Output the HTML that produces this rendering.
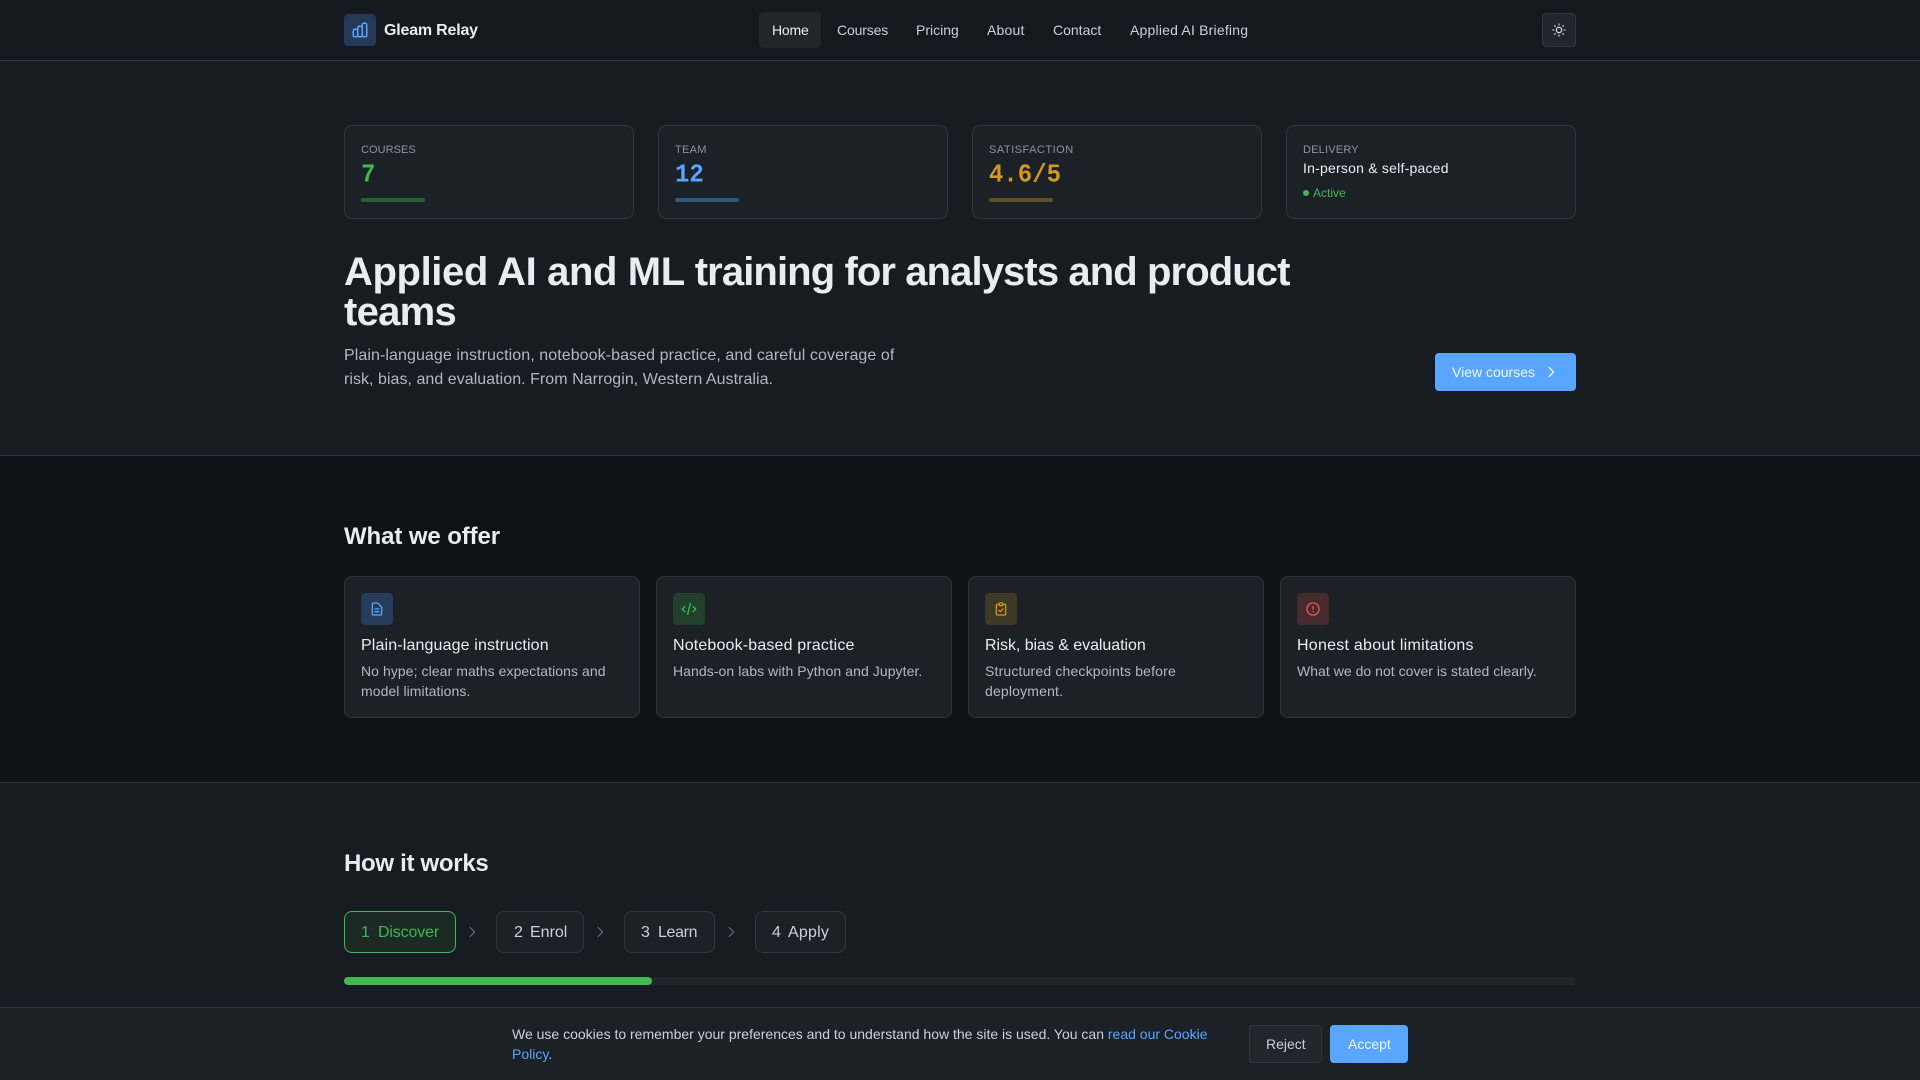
<!DOCTYPE html>
<html lang="en"><head><meta charset="utf-8"><title>Gleam Relay</title>
<style>
*{box-sizing:border-box;margin:0;padding:0}
html,body{width:1920px;height:1080px;overflow:hidden;background:#171b22;font-family:"Liberation Sans",sans-serif;color:#e6edf3}
body{position:relative}
.a,.t{position:absolute}
.t{white-space:nowrap}
svg{position:absolute;fill:none;stroke:currentColor;stroke-width:2;stroke-linecap:round;stroke-linejoin:round}
.hdr{left:0;top:0;width:1920px;height:61px;background:#14181f;border-bottom:1px solid #30363d}
.nav{font-size:14px;line-height:20px;top:20px;color:#c9d1d9}
.stat{top:125px;width:290px;height:94px;background:#1c2128;border:1px solid #30363d;border-radius:8px}
.lab{top:142px;font-size:11px;line-height:17px;color:#8b949e;letter-spacing:.05px}
.val{top:161px;font-family:"Liberation Mono",monospace;font-size:24px;line-height:30px;font-weight:700;transform:scaleY(1.08);transform-origin:left center}
.bar{top:198px;width:64px;height:4px;border-radius:2px;opacity:.4}
.card{top:576px;width:296px;height:142px;background:#1c2128;border:1px solid #30363d;border-radius:8px}
.tile{top:593px;width:32px;height:32px;border-radius:4px}
.ct{top:635px;font-size:16px;line-height:22px;color:#e6edf3}
.cd{font-size:14px;line-height:20px;color:#b1b8c0}
h2{position:absolute;font-size:24px;line-height:32px;font-weight:700;color:#e6edf3;white-space:nowrap}
.step{top:911px;height:42px;border:1px solid #30363d;border-radius:8px;background:#1c2128}
.sn,.sl{top:922px;font-size:16px;line-height:22px;color:#c9d1d9}
.btn{border-radius:4px}
</style></head><body>

<header>
<div class="a hdr"></div>
<div class="a" style="left:344px;top:14px;width:32px;height:32px;border-radius:4px;background:#253a57"></div>
<svg style="left:351px;top:21px;color:#58a6ff;stroke-width:2" width="18" height="18" viewBox="0 0 24 24"><path d="M9 19v-6a2 2 0 00-2-2H5a2 2 0 00-2 2v6a2 2 0 002 2h2a2 2 0 002-2zm0 0V9a2 2 0 012-2h2a2 2 0 012 2v10m-6 0a2 2 0 002 2h2a2 2 0 002-2m0 0V5a2 2 0 012-2h2a2 2 0 012 2v14a2 2 0 01-2 2h-2a2 2 0 01-2-2z"/></svg>
<div class="t" style="left:384px;top:20px;font-size:16px;line-height:22px;font-weight:700;letter-spacing:-.2px">Gleam Relay</div>
<div class="a" style="left:759px;top:12px;width:62px;height:36px;border-radius:4px;background:#21262d"></div>
<nav>
<a class="t nav" style="left:772px;color:#e6edf3;letter-spacing:-.2px">Home</a>
<a class="t nav" style="left:837px;letter-spacing:-.15px">Courses</a>
<a class="t nav" style="left:916px">Pricing</a>
<a class="t nav" style="left:987px;letter-spacing:.2px">About</a>
<a class="t nav" style="left:1053px">Contact</a>
<a class="t nav" style="left:1130px;letter-spacing:.2px">Applied AI Briefing</a>
</nav>
<div class="a" style="left:1542px;top:13px;width:34px;height:34px;border-radius:4px;background:#21262d;border:1px solid #30363d"></div>
<svg style="left:1551px;top:22px;color:#c9d1d9" width="16" height="16" viewBox="0 0 24 24"><path d="M12 3v1m0 16v1m9-9h-1M4 12H3m15.364 6.364l-.707-.707M6.343 6.343l-.707-.707m12.728 0l-.707.707M6.343 17.657l-.707.707M16 12a4 4 0 11-8 0 4 4 0 018 0z"/></svg>
</header>

<main>
<div class="a stat" style="left:344px"></div>
<div class="a stat" style="left:658px"></div>
<div class="a stat" style="left:972px"></div>
<div class="a stat" style="left:1286px"></div>
<div class="t lab" style="left:361px">COURSES</div>
<div class="t lab" style="left:675px;letter-spacing:.3px">TEAM</div>
<div class="t lab" style="left:989px;letter-spacing:.5px">SATISFACTION</div>
<div class="t lab" style="left:1303px;letter-spacing:.2px">DELIVERY</div>
<div class="t val" style="left:361px;color:#3fb950">7</div>
<div class="t val" style="left:675px;color:#58a6ff">12</div>
<div class="t val" style="left:989px;color:#d29922">4.6/5</div>
<div class="a bar" style="left:361px;background:#3fb950"></div>
<div class="a bar" style="left:675px;background:#58a6ff"></div>
<div class="a bar" style="left:989px;background:#d29922"></div>
<div class="t" style="left:1303px;top:158px;font-size:14px;line-height:20px;color:#e6edf3;letter-spacing:.22px">In-person &amp; self-paced</div>
<div class="a" style="left:1303px;top:190px;width:6px;height:6px;border-radius:50%;background:#3fb950"></div>
<div class="t" style="left:1313px;top:185px;font-size:12px;line-height:16px;color:#3fb950">Active</div>

<h1 class="a" style="left:344px;top:252px;width:1000px;font-size:40px;line-height:40px;font-weight:700;letter-spacing:-.72px;color:#e6edf3;white-space:nowrap"><span style="letter-spacing:-.39px">Applied AI and ML </span><span style="letter-spacing:-.9px">training for analysts and product</span><br>teams</h1>
<p class="a" style="left:344px;top:344px;width:600px;font-size:16px;line-height:24px;color:#b1b8c0;white-space:nowrap;letter-spacing:.08px">Plain-language instruction, notebook-based practice, and careful coverage of<br><span style="letter-spacing:.04px">risk, bias, and evaluation. From Narrogin, Western Australia.</span></p>
<div class="a btn" style="left:1435px;top:353px;width:141px;height:38px;background:#58a6ff"></div>
<div class="t" style="left:1452px;top:362px;font-size:14px;line-height:20px;color:#f0f6fc">View courses</div>
<svg style="left:1543px;top:364px;color:#f0f6fc" width="16" height="16" viewBox="0 0 24 24"><path d="M9 5l7 7-7 7"/></svg>

<section>
<div class="a" style="left:0;top:455px;width:1920px;height:328px;background:#0f1116;border-top:1px solid #30363d;border-bottom:1px solid #30363d"></div>
<h2 style="left:344px;top:521px;letter-spacing:-.1px">What we offer</h2>
<div class="a card" style="left:344px"></div>
<div class="a card" style="left:656px"></div>
<div class="a card" style="left:968px"></div>
<div class="a card" style="left:1280px"></div>
<div class="a tile" style="left:361px;background:#263c59"></div>
<div class="a tile" style="left:673px;background:#23402e"></div>
<div class="a tile" style="left:985px;background:#403826"></div>
<div class="a tile" style="left:1297px;background:#452a2e"></div>
<svg style="left:369px;top:601px;color:#58a6ff" width="16" height="16" viewBox="0 0 24 24"><path d="M9 12h6m-6 4h6m2 5H7a2 2 0 01-2-2V5a2 2 0 012-2h5.586a1 1 0 01.707.293l5.414 5.414a1 1 0 01.293.707V19a2 2 0 01-2 2z"/></svg>
<svg style="left:681px;top:601px;color:#3fb950" width="16" height="16" viewBox="0 0 24 24"><path d="M10 20l4-16m4 4l4 4-4 4M6 16l-4-4 4-4"/></svg>
<svg style="left:993px;top:601px;color:#d29922" width="16" height="16" viewBox="0 0 24 24"><path d="M9 5H7a2 2 0 00-2 2v12a2 2 0 002 2h10a2 2 0 002-2V7a2 2 0 00-2-2h-2M9 5a2 2 0 002 2h2a2 2 0 002-2M9 5a2 2 0 012-2h2a2 2 0 012 2m-6 9l2 2 4-4"/></svg>
<svg style="left:1305px;top:601px;color:#f85149" width="16" height="16" viewBox="0 0 24 24"><path d="M12 8v4m0 4h.01M21 12a9 9 0 11-18 0 9 9 0 0118 0z"/></svg>
<div class="t ct" style="left:361px;letter-spacing:.14px">Plain-language instruction</div>
<div class="t ct" style="left:673px;letter-spacing:.16px">Notebook-based practice</div>
<div class="t ct" style="left:985px;letter-spacing:-.05px">Risk, bias &amp; evaluation</div>
<div class="t ct" style="left:1297px;letter-spacing:.25px">Honest about limitations</div>
<div class="t cd" style="left:361px;top:661px;letter-spacing:.07px">No hype; clear maths expectations and<br>model limitations.</div>
<div class="t cd" style="left:673px;top:661px;letter-spacing:.07px">Hands-on labs with Python and Jupyter.</div>
<div class="t cd" style="left:985px;top:661px;letter-spacing:.17px">Structured checkpoints before<br>deployment.</div>
<div class="t cd" style="left:1297px;top:661px;letter-spacing:.03px">What we do not cover is stated clearly.</div>
</section>

<section>
<h2 style="left:344px;top:848px;letter-spacing:-.3px">How it works</h2>
<div class="a step" style="left:344px;width:112px;background:#1b2a25;border-color:#3fb950"></div>
<div class="a step" style="left:496px;width:88px"></div>
<div class="a step" style="left:624px;width:91px"></div>
<div class="a step" style="left:755px;width:91px"></div>
<div class="t sn" style="left:361px;color:#3fb950">1</div><div class="t sl" style="left:378px;color:#3fb950;letter-spacing:-.15px">Discover</div>
<div class="t sn" style="left:514px">2</div><div class="t sl" style="left:530px">Enrol</div>
<div class="t sn" style="left:641px">3</div><div class="t sl" style="left:658px;letter-spacing:-.35px">Learn</div>
<div class="t sn" style="left:772px">4</div><div class="t sl" style="left:788px;letter-spacing:.2px">Apply</div>
<svg style="left:464px;top:924px;color:#6e7681;stroke-width:1.5" width="16" height="16" viewBox="0 0 24 24"><path d="M9 5l7 7-7 7"/></svg>
<svg style="left:592px;top:924px;color:#6e7681;stroke-width:1.5" width="16" height="16" viewBox="0 0 24 24"><path d="M9 5l7 7-7 7"/></svg>
<svg style="left:723px;top:924px;color:#6e7681;stroke-width:1.5" width="16" height="16" viewBox="0 0 24 24"><path d="M9 5l7 7-7 7"/></svg>
<div class="a" style="left:344px;top:977px;width:1232px;height:8px;border-radius:4px;background:#21262d"></div>
<div class="a" style="left:344px;top:977px;width:308px;height:8px;border-radius:4px;background:#3fb950"></div>
</section>
</main>

<aside>
<div class="a" style="left:0;top:1007px;width:1920px;height:73px;background:#1c2128;border-top:1px solid #30363d"></div>
<div class="t" style="left:512px;top:1024px;font-size:14px;line-height:20px;color:#c9d1d9">We use cookies to remember your preferences and to understand how the site is used. You can <span style="color:#58a6ff">read our Cookie</span><br><span style="color:#58a6ff">Policy</span>.</div>
<div class="a btn" style="left:1249px;top:1025px;width:73px;height:38px;background:#21262d;border:1px solid #30363d"></div>
<div class="t" style="left:1266px;top:1034px;font-size:14px;line-height:20px;color:#c9d1d9">Reject</div>
<div class="a btn" style="left:1330px;top:1025px;width:78px;height:38px;background:#58a6ff"></div>
<div class="t" style="left:1348px;top:1034px;font-size:14px;line-height:20px;color:#f0f6fc">Accept</div>
</aside>
</body></html>
